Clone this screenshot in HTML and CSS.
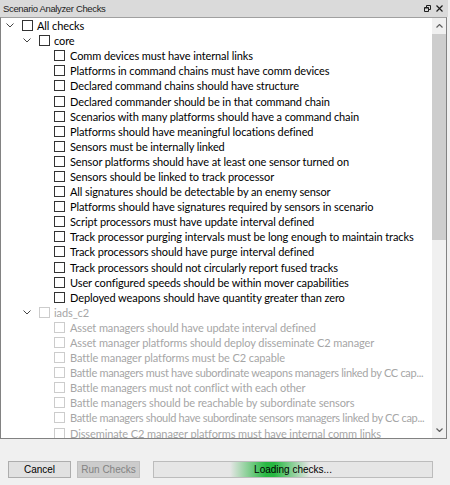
FILE: index.html
```html
<!DOCTYPE html>
<html>
<head>
<meta charset="utf-8">
<link rel="stylesheet" href="styles.css">
</head>
<body>
<div class="window">
  <div class="titlebar">
    <span class="title">Scenario Analyzer Checks</span>
    <span class="title-icons">
      <svg class="ic-float" width="7" height="7" viewBox="0 0 7 7"><path d="M2.5 0.5h4v4h-1.5M2.5 0.5v1.5M0.5 2.5h4v4h-4z M0.5 3h4" fill="none" stroke="#1e1e1e" stroke-width="1"/></svg>
      <svg class="ic-close" width="7" height="7" viewBox="0 0 7 7"><path d="M0.5 0.5l6 6M6.5 0.5l-6 6" stroke="#1e1e1e" stroke-width="1.2"/></svg>
    </span>
  </div>
  <div class="tree">
    <div class="tree-list">
      <div class="row l0"><span class="chev"><svg width="8" height="5" viewBox="0 0 8 5"><path d="M0.5 0.5l3.5 3.5l3.5-3.5" fill="none" stroke="#444" stroke-width="1"/></svg></span><span class="cb"></span><span class="lbl">All checks</span></div>
      <div class="row l1"><span class="chev"><svg width="8" height="5" viewBox="0 0 8 5"><path d="M0.5 0.5l3.5 3.5l3.5-3.5" fill="none" stroke="#444" stroke-width="1"/></svg></span><span class="cb"></span><span class="lbl">core</span></div>
      <div class="row l2"><span class="cb"></span><span class="lbl">Comm devices must have internal links</span></div>
      <div class="row l2"><span class="cb"></span><span class="lbl">Platforms in command chains must have comm devices</span></div>
      <div class="row l2"><span class="cb"></span><span class="lbl">Declared command chains should have structure</span></div>
      <div class="row l2"><span class="cb"></span><span class="lbl">Declared commander should be in that command chain</span></div>
      <div class="row l2"><span class="cb"></span><span class="lbl">Scenarios with many platforms should have a command chain</span></div>
      <div class="row l2"><span class="cb"></span><span class="lbl">Platforms should have meaningful locations defined</span></div>
      <div class="row l2"><span class="cb"></span><span class="lbl">Sensors must be internally linked</span></div>
      <div class="row l2"><span class="cb"></span><span class="lbl">Sensor platforms should have at least one sensor turned on</span></div>
      <div class="row l2"><span class="cb"></span><span class="lbl">Sensors should be linked to track processor</span></div>
      <div class="row l2"><span class="cb"></span><span class="lbl">All signatures should be detectable by an enemy sensor</span></div>
      <div class="row l2"><span class="cb"></span><span class="lbl">Platforms should have signatures required by sensors in scenario</span></div>
      <div class="row l2"><span class="cb"></span><span class="lbl">Script processors must have update interval defined</span></div>
      <div class="row l2"><span class="cb"></span><span class="lbl">Track processor purging intervals must be long enough to maintain tracks</span></div>
      <div class="row l2"><span class="cb"></span><span class="lbl">Track processors should have purge interval defined</span></div>
      <div class="row l2"><span class="cb"></span><span class="lbl">Track processors should not circularly report fused tracks</span></div>
      <div class="row l2"><span class="cb"></span><span class="lbl">User configured speeds should be within mover capabilities</span></div>
      <div class="row l2"><span class="cb"></span><span class="lbl">Deployed weapons should have quantity greater than zero</span></div>
      <div class="row l1 dis"><span class="chev"><svg width="8" height="5" viewBox="0 0 8 5"><path d="M0.5 0.5l3.5 3.5l3.5-3.5" fill="none" stroke="#444" stroke-width="1"/></svg></span><span class="cb"></span><span class="lbl">iads_c2</span></div>
      <div class="row l2 dis"><span class="cb"></span><span class="lbl">Asset managers should have update interval defined</span></div>
      <div class="row l2 dis"><span class="cb"></span><span class="lbl">Asset manager platforms should deploy disseminate C2 manager</span></div>
      <div class="row l2 dis"><span class="cb"></span><span class="lbl">Battle manager platforms must be C2 capable</span></div>
      <div class="row l2 dis tight"><span class="cb"></span><span class="lbl">Battle managers must have subordinate weapons managers linked by CC cap...</span></div>
      <div class="row l2 dis"><span class="cb"></span><span class="lbl">Battle managers must not conflict with each other</span></div>
      <div class="row l2 dis"><span class="cb"></span><span class="lbl">Battle managers should be reachable by subordinate sensors</span></div>
      <div class="row l2 dis tight"><span class="cb"></span><span class="lbl">Battle managers should have subordinate sensors managers linked by CC cap...</span></div>
      <div class="row l2 dis"><span class="cb"></span><span class="lbl">Disseminate C2 manager platforms must have internal comm links</span></div>
    </div>
    <div class="scrollbar">
      <div class="sb-btn"><svg width="7" height="4" viewBox="0 0 7 4"><path d="M0.5 3.5l3-3l3 3" fill="none" stroke="#606060" stroke-width="1.2"/></svg></div>
      <div class="sb-track"><div class="sb-thumb"></div></div>
      <div class="sb-btn"><svg width="7" height="4" viewBox="0 0 7 4"><path d="M0.5 0.5l3 3l3-3" fill="none" stroke="#606060" stroke-width="1.2"/></svg></div>
    </div>
  </div>
  <div class="footer">
    <button class="btn">Cancel</button>
    <button class="btn disabled">Run Checks</button>
    <div class="progress"><div class="glow"></div><span class="ptext">Loading checks...</span></div>
  </div>
</div>
</body>
</html>
```
FILE: styles.css
```css
* { box-sizing: border-box; }
html, body { margin: 0; padding: 0; background: #f0f0f0; }
body { width: 450px; height: 485px; overflow: hidden; font-family: "Lato", "Open Sans", sans-serif; }
.window { width: 450px; height: 485px; display: flex; flex-direction: column; }
.titlebar { height: 17px; background: #dadada; display: flex; align-items: center; justify-content: space-between; padding: 0 5px 0 3px; margin-right: 2px; }
.title { font-family: "Liberation Sans", sans-serif; font-size: 9.5px; letter-spacing: -0.35px; color: #1e1e1e; }
.title-icons { display: flex; gap: 5px; align-items: center; }
.tree { height: 422px; margin-right: 3px; border: 1px solid #828282; border-top-color: #a0a0a0; background: #fff; display: flex; overflow: hidden; }
.tree-list { flex: 1; padding-top: 0; overflow: hidden; }
.row { height: 15.1px; display: flex; align-items: center; white-space: nowrap; font-size: 11px; letter-spacing: -0.1px; color: #000; }
.row.l0 { padding-left: 5px; }
.row.l1 { padding-left: 22px; }
.row.l2 { padding-left: 53px; }
.row.tight { letter-spacing: -0.3px; }
.chev { width: 8px; height: 5px; display: flex; margin-right: 8px; }
.chev svg { display: block; }
.cb { width: 11px; height: 11px; border: 1px solid #333; background: #fff; flex: none; margin-right: 4px; }
.lbl { line-height: 15px; }
.row.dis { color: #a6a6a6; }
.row.dis .cb { border-color: #cccccc; }
.row.l2 .cb { margin-right: 5px; }
.scrollbar { width: 14px; flex: none; background: #f0f0f0; display: flex; flex-direction: column; }
.sb-btn { height: 16px; display: flex; align-items: center; justify-content: center; }
.sb-track { flex: 1; }
.sb-thumb { height: 206px; background: #cdcdcd; }
.footer { flex: 1; display: flex; align-items: flex-start; padding: 22px 0 0 8px; }
.btn { width: 63px; height: 17px; background: #e1e1e1; border: 1px solid #adadad; font-family: "Liberation Sans", sans-serif; font-size: 10px; color: #000; padding: 0; margin-right: 6px; border-radius: 0; }
.btn.disabled { background: #cccccc; border-color: #bfbfbf; color: #838383; margin-right: 13px; }
.progress { position: relative; width: 280px; height: 17px; background: #e6e6e6; border: 1px solid #bcbcbc; display: flex; align-items: center; justify-content: center; overflow: hidden; }
.glow { position: absolute; left: 76px; top: 0; bottom: 0; width: 80px; background: linear-gradient(90deg, rgba(6,176,37,0) 0%, rgba(6,176,37,0.85) 45%, rgba(6,176,37,0.85) 55%, rgba(6,176,37,0) 100%); }
.ptext { position: relative; font-family: "Liberation Sans", sans-serif; font-size: 10px; color: #000; }
```
